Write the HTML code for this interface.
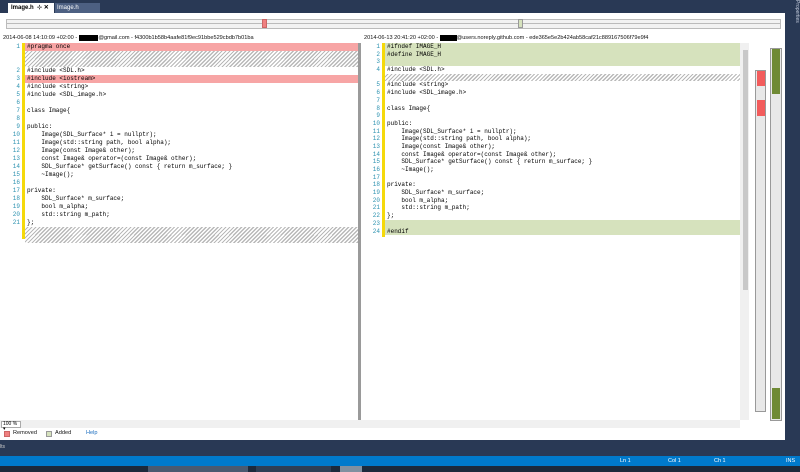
<!DOCTYPE html>
<html><head><meta charset="utf-8"><style>
*{margin:0;padding:0;box-sizing:border-box}
body{width:800px;height:472px;overflow:hidden;background:#293955;font-family:"Liberation Sans",sans-serif;position:relative}
.abs{position:absolute}
.code{font-family:"Liberation Mono",monospace;font-size:6px;color:#000}
.row{height:8px;line-height:8px;white-space:pre;position:relative}
.r2 .row{height:7.7px;line-height:7.7px}
.n{position:absolute;width:20px;text-align:right;color:#2b91af}
.t{position:absolute}
.rem{background:#f7a5a5}
.add{background:#d6e2bd}
.hat{background:repeating-linear-gradient(135deg,#fff 0 1.5px,#b8b8b8 1.5px 2.8px)}
.small{font-size:5.6px;color:#111}
</style></head><body>
<div class="abs" style="left:8px;top:3px;width:46px;height:10px;background:#fff;font-size:6px;line-height:10px;padding-left:3px;font-weight:bold;color:#000">Image.h &nbsp;⊹ ✕</div>
<div class="abs" style="left:55px;top:3px;width:45px;height:10px;background:#4d6082;font-size:6px;line-height:10px;padding-left:2px;color:#fff">Image.h</div>
<div class="abs" style="left:781px;top:0;width:19px;height:100px;color:#c8d0e0;font-size:5px;writing-mode:vertical-rl">Properties</div>
<div class="abs" style="left:0;top:13px;width:785px;height:427px;background:#fff"></div>
<div class="abs" style="left:6px;top:19px;width:775px;height:10px;border:1px solid #bbb;background:#f2f2f2"></div>
<div class="abs" style="left:6px;top:23px;width:775px;height:1px;background:#bbb"></div>
<div class="abs" style="left:262px;top:19px;width:5px;height:9px;background:#f08080;border:1px solid #c66"></div>
<div class="abs" style="left:518px;top:19px;width:5px;height:9px;background:#d6e2bd;border:1px solid #999"></div>
<div class="abs small" style="left:3px;top:35px;white-space:nowrap">2014-06-08 14:10:09 +02:00 - <span style="background:#000;color:#000">xxxxxxx</span>@gmail.com - f4300b1b58b4aafe81f9ec91bbe529cbdb7b01ba</div>
<div class="abs small" style="left:364px;top:35px;white-space:nowrap">2014-06-13 20:41:20 +02:00 - <span style="background:#000;color:#000">xxxxxx</span>@users.noreply.github.com - ede365e5e2b424ab58caf21c889167506f79e9f4</div>
<div class="abs" style="left:358px;top:43px;width:3px;height:385px;background:#9a9a9a"></div>
<div class="abs" style="left:22px;top:43px;width:3px;height:196px;background:#f5d90a"></div>
<div class="abs" style="left:382px;top:43px;width:3px;height:194px;background:#f5d90a"></div>
<div class="abs code" style="left:0;top:43px;width:358px">
<div class="row"><span class="n">1</span><span class="t rem" style="left:25px;right:0;padding-left:2px">#pragma once</span></div>
<div class="row hat" style="margin-left:25px"></div>
<div class="row hat" style="margin-left:25px"></div>
<div class="row"><span class="n">2</span><span class="t" style="left:27px">#include &lt;SDL.h&gt;</span></div>
<div class="row"><span class="n">3</span><span class="t rem" style="left:25px;right:0;padding-left:2px">#include &lt;iostream&gt;</span></div>
<div class="row"><span class="n">4</span><span class="t" style="left:27px">#include &lt;string&gt;</span></div>
<div class="row"><span class="n">5</span><span class="t" style="left:27px">#include &lt;SDL_image.h&gt;</span></div>
<div class="row"><span class="n">6</span></div>
<div class="row"><span class="n">7</span><span class="t" style="left:27px">class Image{</span></div>
<div class="row"><span class="n">8</span></div>
<div class="row"><span class="n">9</span><span class="t" style="left:27px">public:</span></div>
<div class="row"><span class="n">10</span><span class="t" style="left:27px">    Image(SDL_Surface* i = nullptr);</span></div>
<div class="row"><span class="n">11</span><span class="t" style="left:27px">    Image(std::string path, bool alpha);</span></div>
<div class="row"><span class="n">12</span><span class="t" style="left:27px">    Image(const Image&amp; other);</span></div>
<div class="row"><span class="n">13</span><span class="t" style="left:27px">    const Image&amp; operator=(const Image&amp; other);</span></div>
<div class="row"><span class="n">14</span><span class="t" style="left:27px">    SDL_Surface* getSurface() const { return m_surface; }</span></div>
<div class="row"><span class="n">15</span><span class="t" style="left:27px">    ~Image();</span></div>
<div class="row"><span class="n">16</span></div>
<div class="row"><span class="n">17</span><span class="t" style="left:27px">private:</span></div>
<div class="row"><span class="n">18</span><span class="t" style="left:27px">    SDL_Surface* m_surface;</span></div>
<div class="row"><span class="n">19</span><span class="t" style="left:27px">    bool m_alpha;</span></div>
<div class="row"><span class="n">20</span><span class="t" style="left:27px">    std::string m_path;</span></div>
<div class="row"><span class="n">21</span><span class="t" style="left:27px">};</span></div>
<div class="row hat" style="margin-left:25px"></div>
<div class="row hat" style="margin-left:25px"></div>
</div>
<div class="abs code r2" style="left:360px;top:43px;width:380px">
<div class="row"><span class="n">1</span><span class="t add" style="left:25px;right:0;padding-left:2px">#ifndef IMAGE_H</span></div>
<div class="row"><span class="n">2</span><span class="t add" style="left:25px;right:0;padding-left:2px">#define IMAGE_H</span></div>
<div class="row"><span class="n">3</span><span class="t add" style="left:25px;right:0;padding-left:2px"> </span></div>
<div class="row"><span class="n">4</span><span class="t" style="left:27px">#include &lt;SDL.h&gt;</span></div>
<div class="row hat" style="margin-left:25px"></div>
<div class="row"><span class="n">5</span><span class="t" style="left:27px">#include &lt;string&gt;</span></div>
<div class="row"><span class="n">6</span><span class="t" style="left:27px">#include &lt;SDL_image.h&gt;</span></div>
<div class="row"><span class="n">7</span></div>
<div class="row"><span class="n">8</span><span class="t" style="left:27px">class Image{</span></div>
<div class="row"><span class="n">9</span></div>
<div class="row"><span class="n">10</span><span class="t" style="left:27px">public:</span></div>
<div class="row"><span class="n">11</span><span class="t" style="left:27px">    Image(SDL_Surface* i = nullptr);</span></div>
<div class="row"><span class="n">12</span><span class="t" style="left:27px">    Image(std::string path, bool alpha);</span></div>
<div class="row"><span class="n">13</span><span class="t" style="left:27px">    Image(const Image&amp; other);</span></div>
<div class="row"><span class="n">14</span><span class="t" style="left:27px">    const Image&amp; operator=(const Image&amp; other);</span></div>
<div class="row"><span class="n">15</span><span class="t" style="left:27px">    SDL_Surface* getSurface() const { return m_surface; }</span></div>
<div class="row"><span class="n">16</span><span class="t" style="left:27px">    ~Image();</span></div>
<div class="row"><span class="n">17</span></div>
<div class="row"><span class="n">18</span><span class="t" style="left:27px">private:</span></div>
<div class="row"><span class="n">19</span><span class="t" style="left:27px">    SDL_Surface* m_surface;</span></div>
<div class="row"><span class="n">20</span><span class="t" style="left:27px">    bool m_alpha;</span></div>
<div class="row"><span class="n">21</span><span class="t" style="left:27px">    std::string m_path;</span></div>
<div class="row"><span class="n">22</span><span class="t" style="left:27px">};</span></div>
<div class="row"><span class="n">23</span><span class="t add" style="left:25px;right:0;padding-left:2px"> </span></div>
<div class="row"><span class="n">24</span><span class="t add" style="left:25px;right:0;padding-left:2px">#endif</span></div>
</div>
<div class="abs" style="left:740px;top:43px;width:9px;height:377px;background:#f0f0f0"></div>
<div class="abs" style="left:743px;top:50px;width:5px;height:240px;background:#c8c8c8"></div>
<div class="abs" style="left:755px;top:70px;width:11px;height:342px;background:#e8e8e8;border:1px solid #999"></div>
<div class="abs" style="left:770px;top:48px;width:12px;height:373px;background:#e8e8e8;border:1px solid #999"></div>
<div class="abs" style="left:757px;top:71px;width:8px;height:15px;background:#f25c5c"></div>
<div class="abs" style="left:757px;top:100px;width:8px;height:16px;background:#f25c5c"></div>
<div class="abs" style="left:772px;top:49px;width:8px;height:45px;background:#6f8a35"></div>
<div class="abs" style="left:772px;top:388px;width:8px;height:31px;background:#6f8a35"></div>
<div class="abs" style="left:0;top:420px;width:740px;height:8px;background:#f0f0f0"></div>
<div class="abs" style="left:1px;top:421px;width:20px;height:7px;border:1px solid #aaa;background:#fff;font-size:5px;line-height:5px;padding-left:1px">100 % ▾</div>
<div class="abs" style="left:4px;top:431px;width:6px;height:6px;background:#f08080;border:1px solid #c66"></div>
<div class="abs small" style="left:13px;top:430px">Removed</div>
<div class="abs" style="left:46px;top:431px;width:6px;height:6px;background:#d6e2bd;border:1px solid #999"></div>
<div class="abs small" style="left:55px;top:430px">Added</div>
<div class="abs small" style="left:86px;top:430px;color:#1e70c0">Help</div>
<div class="abs" style="left:0;top:444px;font-size:5px;color:#ccc">lts</div>
<div class="abs" style="left:0;top:456px;width:800px;height:10px;background:#007acc;color:#fff;font-size:5.5px;line-height:10px">
<span class="abs" style="left:620px">Ln 1</span><span class="abs" style="left:668px">Col 1</span><span class="abs" style="left:714px">Ch 1</span><span class="abs" style="left:786px">INS</span></div>
<div class="abs" style="left:0;top:466px;width:800px;height:6px;background:#1c2a3c"></div>
<div class="abs" style="left:148px;top:466px;width:100px;height:6px;background:#4a5a70"></div>
<div class="abs" style="left:256px;top:466px;width:75px;height:6px;background:#2e3f55"></div>
<div class="abs" style="left:340px;top:466px;width:22px;height:6px;background:#8090a0"></div>
</body></html>
